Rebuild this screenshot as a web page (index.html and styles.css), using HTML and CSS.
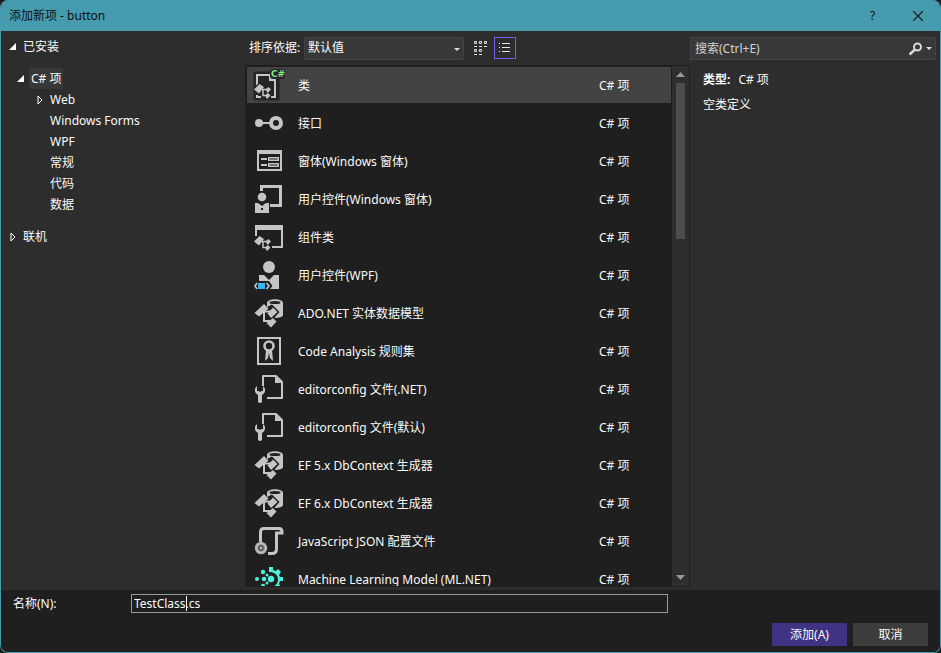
FILE: index.html
```html
<!DOCTYPE html>
<html lang="zh-CN">
<head>
<meta charset="utf-8">
<title>添加新项 - button</title>
<link rel="stylesheet" href="styles.css">
</head>
<body>
<svg class="defs" aria-hidden="true">
  <defs>
    <g id="i-nodes">
      <path d="M1 20.500 6.500 15 11 18 6 24.500Z" fill="#c5c5c5"/>
      <path d="M9 20.500H15M10 20.500V26.500H14" fill="none" stroke="#c5c5c5" stroke-width="1.500"/>
      <path d="M12.500 20.500 15.500 18 18 20.500 14.500 24ZM12 26.500 15 24 17.500 26.500 14 30Z" fill="#c5c5c5"/>
    </g>
    <symbol id="i-class" viewBox="0 0 32 32">
      <path d="M2 4H21L25 9V30H2Z" fill="#252526" stroke="#252526" stroke-width="3" stroke-linejoin="round"/>
      <path d="M4 16V6H17L22 11V28H18M4 26V28H8" fill="none" stroke="#c5c5c5" stroke-width="2"/>
      <path d="M16 5V12H23Z" fill="#c5c5c5"/>
      <path d="M0 21 6 13 13 17 19 19 18 28 12 31 10 28" fill="#252526"/>
      <use href="#i-nodes"/>
      <rect x="17" y="0" width="15" height="10" rx="3" fill="#252526"/>
      <text x="18" y="8" class="badge">C#</text>
    </symbol>
    <symbol id="i-interface" viewBox="0 0 32 32">
      <circle cx="6" cy="16" r="4" fill="#c5c5c5"/>
      <path d="M8 16H18" stroke="#c5c5c5" stroke-width="2"/>
      <circle cx="23" cy="16" r="5" fill="none" stroke="#c5c5c5" stroke-width="4"/>
    </symbol>
    <symbol id="i-form" viewBox="0 0 32 32">
      <path d="M4 5H29V26H4ZM6 9V24H27V9Z" fill="#c5c5c5" fill-rule="evenodd"/>
      <path d="M8 13H14V15H8ZM8 19H14V21H8Z" fill="#c5c5c5"/>
      <path d="M15 12H26V16H15ZM16.500 13.500V14.500H24.500V13.500ZM15 18H26V22H15ZM16.500 19.500V20.500H24.500V19.500Z" fill="#c5c5c5" fill-rule="evenodd"/>
    </symbol>
    <symbol id="i-control" viewBox="0 0 32 32">
      <path d="M7 8V2H29V24H17V21H26V5H10V8Z" fill="#c5c5c5"/>
      <circle cx="9" cy="14" r="4.300" fill="#c5c5c5"/>
      <path d="M2 20H5L9 23 13 20H16V30H2Z" fill="#c5c5c5"/>
      <rect x="8" y="25" width="2" height="2" fill="#1f1f1f"/>
    </symbol>
    <symbol id="i-component" viewBox="0 0 32 32">
      <path d="M2 15V4H30V27H19V25H28V9H4V15Z" fill="#c5c5c5"/>
      <use href="#i-nodes"/>
    </symbol>
    <symbol id="i-wpf" viewBox="0 0 32 32">
      <circle cx="16" cy="8" r="6" fill="#c5c5c5"/>
      <path d="M6 16H11L16 21 21 16H26V30H17L19.500 27 16 22H6Z" fill="#c5c5c5"/>
      <rect x="5" y="24" width="7" height="6" fill="#3bb4f5"/>
      <path d="M4 24 2 27 4 30M13.500 24 16 27 13.500 30" fill="none" stroke="#c5c5c5" stroke-width="1.600"/>
    </symbol>
    <symbol id="i-data" viewBox="0 0 32 32">
      <path d="M14 6C14 1 30 1 30 6V18C30 20 26 21 22 21L14 14Z" fill="#c5c5c5"/>
      <ellipse cx="22" cy="5.500" rx="5.500" ry="1.500" fill="#1f1f1f"/>
      <path d="M12 11 19 7.500 26.500 15 20 22.500 10 24Z" fill="#1f1f1f"/>
      <path d="M1.500 16 11 7 15.500 11.500 6 19.500ZM14.500 16.500 20 10.500 24.500 15 18 21ZM13.500 26 20 21 23.500 24.500 18 30.500Z" fill="#c5c5c5"/>
      <path d="M10 14.500H18M11 14.500V24H17" fill="none" stroke="#c5c5c5" stroke-width="2"/>
    </symbol>
    <symbol id="i-rules" viewBox="0 0 32 32">
      <rect x="5" y="3" width="22" height="26" fill="none" stroke="#c5c5c5" stroke-width="2"/>
      <circle cx="16" cy="11" r="4.500" fill="none" stroke="#c5c5c5" stroke-width="2.600"/>
      <path d="M13 15H19L20 26 17 23 16 18 15 23 12 26Z" fill="#c5c5c5"/>
    </symbol>
    <symbol id="i-config" viewBox="0 0 32 32">
      <path d="M10 13V3H23L29 9V25H14" fill="none" stroke="#c5c5c5" stroke-width="2" stroke-linejoin="round"/>
      <path d="M22 3V10H29Z" fill="#c5c5c5"/>
      <path d="M4 13C1 15 1 20 5 22V29Q7 31 9 29V22C13 20 13 15 10 13V18H8.500L7 19 5.500 18H4Z" fill="#c5c5c5"/>
    </symbol>
    <radialGradient id="ball" cx=".5" cy=".5" r=".5">
      <stop offset="0" stop-color="#fff"/><stop offset=".3" stop-color="#444"/>
      <stop offset=".7" stop-color="#c5c5c5"/><stop offset="1" stop-color="#999"/>
    </radialGradient>
    <symbol id="i-json" viewBox="0 0 32 32">
      <path d="M7.500 17V7Q7.500 3.500 11 3.500H26Q29 3.500 29 7V8H23.500V24Q23.500 28.500 19 28.500H15" fill="none" stroke="#c5c5c5" stroke-width="3"/>
      <circle cx="8" cy="23" r="6.300" fill="url(#ball)"/>
    </symbol>
    <symbol id="i-ml" viewBox="0 0 32 32">
      <g fill="#50edda">
        <circle cx="4" cy="16" r="2"/><circle cx="10" cy="9" r="2.200"/><circle cx="11" cy="16" r="2.300"/>
        <circle cx="10" cy="23" r="2.200"/><circle cx="18" cy="16" r="3.200"/>
        <path d="M16 4H20V7L23 8 25 6 28 9 26 12 27 14H30V18H27L26 21 28 24 25 27 22 25 20 26V29H16V24C28 25 28 8 16 9Z"/>
        <circle cx="14" cy="12" r="1.500"/><circle cx="14" cy="20" r="1.500"/>
      </g>
    </symbol>
  </defs>
</svg>

<div class="window">
  <header class="titlebar">
    <h1>添加新项 - button</h1>
    <button class="cap" aria-label="帮助">?</button>
    <button class="cap" aria-label="关闭"><svg width="10" height="10" viewBox="0 0 10 10"><path d="M0 0 10 10M10 0 0 10" stroke="#101010" stroke-width="1.200"/></svg></button>
  </header>

  <main class="content">
    <nav class="tree">
      <ul>
        <li class="group"><button class="node"><svg class="tw" viewBox="0 0 8 8"><path d="M7 0V7H0Z" fill="#fff"/></svg><span>已安装</span></button>
          <ul class="level1">
            <li><button class="node"><svg class="tw" viewBox="0 0 8 8"><path d="M7 0V7H0Z" fill="#fff"/></svg><span class="selected">C# 项</span></button>
              <ul class="level2">
                <li><button class="node"><svg class="tw" viewBox="0 0 8 8"><path d="M2 0 6 4 2 8Z" fill="none" stroke="#fff"/></svg><span>Web</span></button></li>
                <li><button class="node leaf"><span>Windows Forms</span></button></li>
                <li><button class="node leaf"><span>WPF</span></button></li>
                <li><button class="node leaf"><span>常规</span></button></li>
                <li><button class="node leaf"><span>代码</span></button></li>
                <li><button class="node leaf"><span>数据</span></button></li>
              </ul>
            </li>
          </ul>
        </li>
        <li><button class="node"><svg class="tw" viewBox="0 0 8 8"><path d="M2 0 6 4 2 8Z" fill="none" stroke="#fff"/></svg><span>联机</span></button></li>
      </ul>
    </nav>

    <section class="templates">
      <div class="toolbar">
        <label for="sort">排序依据:</label>
        <div class="combo">
          <select id="sort"><option>默认值</option></select>
          <svg width="6" height="3" viewBox="0 0 6 3"><path d="M0 0H6L3 3Z" fill="#ddd"/></svg>
        </div>
        <button class="view" aria-label="中等图标"><svg width="14" height="14" viewBox="0 0 14 14"><g fill="none" stroke="#e0e0e0"><path d="M.5.500H2.500V2.500H.500ZM5.500.500H7.500V2.500H5.500ZM10.500.500H12.500V2.500H10.500ZM.500 8.500H2.500V10.500H.500ZM5.500 8.500H7.500V10.500H5.500Z"/><path d="M0 5.500H3M5 5.500H8M10 5.500H13M0 13.500H3M5 13.500H8"/></g></svg></button>
        <button class="view active" aria-label="小图标"><svg width="12" height="10" viewBox="0 0 12 10"><path d="M0 .500H1M3 .500H11M0 4.500H1M3 4.500H11M0 8.500H1M3 8.500H11" stroke="#e8e8e8"/></svg></button>
      </div>
      <div class="listbox">
        <ul class="items">
          <li class="item current"><svg class="icon"><use href="#i-class"/></svg><span class="name">类</span><span class="kind">C# 项</span></li>
          <li class="item"><svg class="icon"><use href="#i-interface"/></svg><span class="name">接口</span><span class="kind">C# 项</span></li>
          <li class="item"><svg class="icon"><use href="#i-form"/></svg><span class="name">窗体(Windows 窗体)</span><span class="kind">C# 项</span></li>
          <li class="item"><svg class="icon"><use href="#i-control"/></svg><span class="name">用户控件(Windows 窗体)</span><span class="kind">C# 项</span></li>
          <li class="item"><svg class="icon"><use href="#i-component"/></svg><span class="name">组件类</span><span class="kind">C# 项</span></li>
          <li class="item"><svg class="icon"><use href="#i-wpf"/></svg><span class="name">用户控件(WPF)</span><span class="kind">C# 项</span></li>
          <li class="item"><svg class="icon"><use href="#i-data"/></svg><span class="name">ADO.NET 实体数据模型</span><span class="kind">C# 项</span></li>
          <li class="item"><svg class="icon"><use href="#i-rules"/></svg><span class="name">Code Analysis 规则集</span><span class="kind">C# 项</span></li>
          <li class="item"><svg class="icon"><use href="#i-config"/></svg><span class="name">editorconfig 文件(.NET)</span><span class="kind">C# 项</span></li>
          <li class="item"><svg class="icon"><use href="#i-config"/></svg><span class="name">editorconfig 文件(默认)</span><span class="kind">C# 项</span></li>
          <li class="item"><svg class="icon"><use href="#i-data"/></svg><span class="name">EF 5.x DbContext 生成器</span><span class="kind">C# 项</span></li>
          <li class="item"><svg class="icon"><use href="#i-data"/></svg><span class="name">EF 6.x DbContext 生成器</span><span class="kind">C# 项</span></li>
          <li class="item"><svg class="icon"><use href="#i-json"/></svg><span class="name">JavaScript JSON 配置文件</span><span class="kind">C# 项</span></li>
          <li class="item"><svg class="icon"><use href="#i-ml"/></svg><span class="name">Machine Learning Model (ML.NET)</span><span class="kind">C# 项</span></li>
        </ul>
        <div class="scrollbar">
          <svg width="9" height="5" viewBox="0 0 9 5"><path d="M0 5H9L4.500 0Z" fill="#999"/></svg>
          <div class="track"><div class="thumb"></div></div>
          <svg width="9" height="5" viewBox="0 0 9 5"><path d="M0 0H9L4.500 5Z" fill="#999"/></svg>
        </div>
      </div>
    </section>

    <aside class="details">
      <div class="search">
        <input type="text" aria-label="搜索" placeholder="搜索(Ctrl+E)">
        <svg width="14" height="14" viewBox="0 0 14 14"><circle cx="9.500" cy="5" r="3.500" fill="none" stroke="#d8d8d8" stroke-width="2"/><path d="M7 7.500 1.500 12.500" stroke="#d8d8d8" stroke-width="2.500"/></svg>
        <svg width="6" height="3" viewBox="0 0 6 3"><path d="M0 0H6L3 3Z" fill="#ddd"/></svg>
      </div>
      <p><b>类型:</b>C# 项</p>
      <p>空类定义</p>
    </aside>
  </main>

  <footer class="footer">
    <div class="namerow">
      <label for="name">名称(N):</label>
      <div class="namebox"><input id="name" type="text" value="TestClass.cs"><i class="caret"></i></div>
    </div>
    <div class="actions">
      <button class="btn primary">添加(A)</button>
      <button class="btn">取消</button>
    </div>
  </footer>
</div>
</body>
</html>
```

FILE: styles.css
```css
* { box-sizing: border-box; }

body {
  margin: 0;
  background: #1c1c1c;
  color: #fafafa;
  font: 12px/16px "Noto Sans", "Noto Sans CJK SC", sans-serif;
}

button, input, select {
  margin: 0;
  padding: 0;
  border: 0;
  border-radius: 0;
  background: none;
  color: inherit;
  font: inherit;
  outline: none;
}

ul { margin: 0; padding: 0; list-style: none; }
p { margin: 0; }
svg { display: block; flex: none; }
.defs { position: absolute; width: 0; height: 0; }
.badge { font: bold 9px "DejaVu Sans", sans-serif; fill: #8ae28a; }

.window {
  display: flex;
  flex-direction: column;
  height: 100vh;
  border: 1px solid #469bae;
  border-top: 0;
  border-radius: 8px;
  background: #2d2d2d;
  overflow: hidden;
}

.titlebar {
  display: flex;
  align-items: center;
  height: 31px;
  padding-left: 8px;
  background: #469bae;
  color: #101010;
}
.titlebar h1 { flex: 1; margin: 0; font-size: 12px; font-weight: 400; }
.cap { display: grid; place-items: center; width: 45px; height: 31px; }

.content {
  flex: 1;
  min-height: 0;
  display: grid;
  grid-template-columns: 244px minmax(0, 445px) minmax(246px, 1fr);
  grid-template-rows: minmax(0, 1fr);
}

.tree { padding: 5px 8px; }
.node { display: flex; align-items: center; height: 21px; }
.node span { padding: 0 2px; line-height: 21px; }
.node .selected { background: #383838; }
.tw { width: 8px; height: 8px; margin-right: 4px; }
.group { margin-bottom: 11px; }
.level1 { padding: 11px 0 0 8px; }
.level2 { padding-left: 19px; }
.leaf { padding-left: 12px; }

.templates { display: flex; flex-direction: column; padding-bottom: 3px; }
.toolbar {
  display: flex;
  align-items: center;
  height: 34px;
  padding-left: 4px;
}
.toolbar label { width: 55px; white-space: nowrap; }
.combo { position: relative; width: 160px; }
.combo select {
  display: block;
  width: 100%;
  height: 23px;
  padding-left: 3px;
  border: 1px solid #434343;
  background: #383838;
  appearance: none;
}
.combo svg { position: absolute; right: 4px; top: 11px; }
.view {
  display: grid;
  place-items: center;
  width: 22px;
  height: 22px;
  margin-left: 6px;
}
.view + .view { margin-left: 2px; }
.view.active { border: 1px solid #7160e8; }

.listbox {
  flex: 1;
  min-height: 0;
  display: flex;
  padding: 1px;
  background: #1f1f1f;
}
.items { flex: 1; overflow: hidden; padding: 1px; }
.item {
  display: flex;
  align-items: center;
  height: 36px;
  margin-bottom: 2px;
  padding-left: 6px;
  line-height: 18px;
}
.item.current { background: #434343; }
.icon { width: 32px; height: 32px; margin-right: 13px; }
.name { flex: 1; padding-top: 2px; white-space: nowrap; }
.kind { width: 72px; padding-top: 2px; }

.scrollbar {
  display: flex;
  flex-direction: column;
  align-items: center;
  width: 17px;
  padding: 6px 0;
  background: #2e2e2e;
}
.track { flex: 1; width: 9px; padding: 6px 0; }
.thumb { height: 32%; background: #4d4d4d; }

.details { padding-right: 4px; }
.search {
  display: flex;
  align-items: center;
  gap: 4px;
  height: 23px;
  margin: 6px 0 12px;
  padding: 0 3px 0 4px;
  border: 1px solid #434343;
  background: #383838;
}
.search input { flex: 1; min-width: 0; }
.search input::placeholder { color: #d0d0d0; opacity: 1; }
.details p { margin: 0 0 9px 13px; }
.details b { margin-right: 8px; }

.footer { padding: 4px 12px 6px; background: #1f1f1f; }
.namerow { display: flex; align-items: center; }
.namerow label { width: 118px; }
.namebox { position: relative; flex: 0 1 537px; }
.namebox input {
  display: block;
  width: 100%;
  height: 19px;
  padding: 0 2px;
  border: 1px solid #999;
  background: #1f1f1f;
}
.caret { position: absolute; left: 55px; top: 2px; width: 1px; height: 15px; background: #fff; }
.actions { display: flex; justify-content: flex-end; gap: 6px; margin-top: 10px; }
.btn { width: 75px; height: 23px; background: #3d3d3d; }
.btn.primary { background: #413384; }
```
